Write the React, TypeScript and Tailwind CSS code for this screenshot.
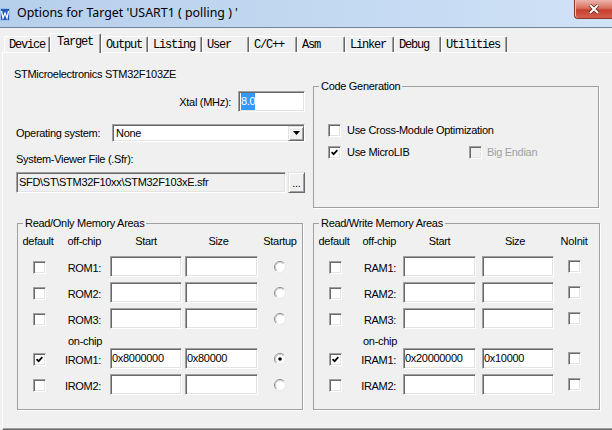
import React from "react";

// classic Win32 3D edges
const sunken =
  "border border-t-[#a0a0a0] border-l-[#a0a0a0] border-r-white border-b-white shadow-[inset_1px_1px_0_#696969,inset_-1px_-1px_0_#e3e3e3]";
const raised =
  "border border-t-[#e3e3e3] border-l-[#e3e3e3] border-r-[#696969] border-b-[#696969] shadow-[inset_1px_1px_0_#fff,inset_-1px_-1px_0_#a0a0a0]";

const tabs = [
  { label: "Device", w: "w-[46px]" },
  { label: "Target", w: "w-[51px]", active: true },
  { label: "Output", w: "w-[47px]" },
  { label: "Listing", w: "w-[54px]" },
  { label: "User", w: "w-[47px]" },
  { label: "C/C++", w: "w-[48px]" },
  { label: "Asm", w: "w-[48px]" },
  { label: "Linker", w: "w-[49px]" },
  { label: "Debug", w: "w-[47px]" },
  { label: "Utilities", w: "w-[66px]" },
];

type Cols = { c1: string; c2: string; start: string; size: string; c5: string };

const roCols: Cols = {
  c1: "w-[40px]",
  c2: "w-[43px]",
  start: "ml-[9px] w-[72px]",
  size: "ml-[3px] w-[73px]",
  c5: "w-[44px]",
};
const rwCols: Cols = {
  c1: "w-[40px]",
  c2: "w-[42px]",
  start: "ml-[7px] w-[73px]",
  size: "ml-[6px] w-[72px]",
  c5: "w-[40px]",
};

function Check({ on, disabled }: { on?: boolean; disabled?: boolean }) {
  return (
    <span
      className={`flex h-[13px] w-[13px] shrink-0 items-center justify-center ${sunken} ${
        disabled ? "bg-[#f0f0f0]" : "bg-white"
      }`}
    >
      {on && (
        <svg width="7" height="7" viewBox="0 0 7 7">
          <path d="M0.6 3.2 L2.6 5.2 L6.4 1.2" stroke="#000" strokeWidth="1.7" fill="none" />
        </svg>
      )}
    </span>
  );
}

function Radio({ on }: { on?: boolean }) {
  return (
    <svg width="12" height="12" viewBox="0 0 12 12">
      <circle cx="6" cy="6" r="5.5" fill="#fff" />
      <path d="M2.1 9.9A5.5 5.5 0 0 1 9.9 2.1" stroke="#8c8c8c" fill="none" />
      <path d="M9.9 2.1A5.5 5.5 0 0 1 2.1 9.9" stroke="#e8e8e8" fill="none" />
      <path d="M2.8 9.2A4.5 4.5 0 0 1 9.2 2.8" stroke="#c8c8c8" fill="none" />
      {on && <circle cx="6" cy="6" r="1.8" fill="#000" />}
    </svg>
  );
}

function Edit({ value, className }: { value?: string; className: string }) {
  return (
    <div className={`flex h-[21px] items-center bg-white pl-[1px] ${sunken} ${className}`}>
      {value}
    </div>
  );
}

function Group({ title, className, children }: { title: string; className: string; children: React.ReactNode }) {
  return (
    <fieldset className={`border border-[#a0a0a0] shadow-[1px_1px_0_#fff] ${className}`}>
      <legend className="ml-[5px] px-[2px] leading-[14px]">{title}</legend>
      {children}
    </fieldset>
  );
}

function MemRow({
  cols,
  label,
  start,
  size,
  def,
  tail,
  className = "",
}: {
  cols: Cols;
  label: string;
  start?: string;
  size?: string;
  def?: boolean;
  tail: React.ReactNode;
  className?: string;
}) {
  return (
    <div className={`flex h-[21px] items-center ${className}`}>
      <span className={`${cols.c1} flex justify-center pl-[2px] pt-[2px]`}>
        <Check on={def} />
      </span>
      <span className={`${cols.c2} pt-[3px] text-right`}>{label}</span>
      <Edit value={start} className={cols.start} />
      <Edit value={size} className={cols.size} />
      <span className={`${cols.c5} flex justify-center`}>{tail}</span>
    </div>
  );
}

function MemHeader({ cols, last }: { cols: Cols; last: string }) {
  return (
    <div className="mt-[4px] flex h-[14px] items-center leading-[14px]">
      <span className={`${cols.c1} text-center`}>default</span>
      <span className={`${cols.c2} text-right`}>off-chip</span>
      <span className={`${cols.start} text-center`}>Start</span>
      <span className={`${cols.size} pr-[6px] text-center`}>Size</span>
      <span className={`${cols.c5} text-center`}>{last}</span>
    </div>
  );
}

export default function App() {
  return (
    <div className="flex h-[430px] w-[612px] flex-col overflow-hidden bg-[#f0f0f0] font-['Liberation_Sans',Arial,sans-serif] text-[11px] tracking-[-0.3px] text-black">
      {/* Title bar */}
      <div className="flex h-[28px] shrink-0 border-b border-[#71839a] bg-[linear-gradient(to_right,#b6cfeb,#c4daf2_60%,#d0e2f6)]">
        <svg width="10" height="13" viewBox="0 0 10 13" className="mt-[8px]">
          <rect x="0" y="0" width="10" height="13" fill="#2456b8" />
          <rect x="0.5" y="0.5" width="9" height="12" fill="none" stroke="#9cc0ee" />
          <path d="M1.5 3 L3 10 L5 5 L7 10 L8.5 3" stroke="#fff" strokeWidth="1.3" fill="none" />
        </svg>
        <span className="ml-[7px] self-center font-['Noto_Sans',sans-serif] text-[12.4px] tracking-normal text-black">
          Options for Target 'USART1 ( polling ) '
        </span>
        <div className="ml-auto flex h-[19px] w-[38px] items-center justify-center self-start rounded-bl-[4px] border-b border-l border-[#8a3128] bg-[linear-gradient(#ebb5ac,#d9705f_45%,#c6402f_55%,#d55e4e)] shadow-[inset_1px_0_0_#f0c4bb]">
          <svg width="12" height="10" viewBox="0 0 12 10">
            <path d="M2 1 L10 9 M10 1 L2 9" stroke="#5b1f19" strokeWidth="3.4" />
            <path d="M2 1 L10 9 M10 1 L2 9" stroke="#fff" strokeWidth="2" />
          </svg>
        </div>
      </div>

      <div className="flex flex-1 flex-col pl-[2px]">
        {/* Tab strip */}
        <div className="flex h-[24px] shrink-0 items-end pl-[2px] font-['Liberation_Mono',monospace] text-[12px] tracking-[-1.2px]">
          {tabs.map((t) => (
            <div
              key={t.label}
              className={`${t.w} flex items-center rounded-t-[2px] border-t border-l border-r border-t-white border-l-white border-r-[#696969] shadow-[inset_-1px_0_0_#a0a0a0] ${
                t.active ? "relative z-10 -mb-px h-[20px] bg-[#f0f0f0] pb-[3px] pl-[6px]" : "h-[16px] pl-[4px] pt-px"
              }`}
            >
              {t.label}
            </div>
          ))}
        </div>

        {/* Target page */}
        <div className="flex flex-1 flex-col border-t border-l border-b border-t-white border-l-white border-b-[#696969] shadow-[inset_0_-1px_0_#a0a0a0]">
          <div className="flex h-[163px] shrink-0 items-start">
            <div className="ml-[11px] flex w-[291px] flex-col">
              <div className="mt-[14px] h-[14px] leading-[14px]">STMicroelectronics STM32F103ZE</div>
              <div className="mt-[10px] flex h-[21px] items-center justify-end">
                <span className="mr-[7px] pt-[2px]">Xtal (MHz):</span>
                <div className={`flex h-[21px] w-[67px] items-center bg-white pl-[2px] ${sunken}`}>
                  <span className="bg-[#3399ff] text-white">8.0</span>
                </div>
              </div>
              <div className="mt-[12px] flex h-[18px] items-center">
                <span className="ml-[2px] w-[96px]">Operating system:</span>
                <div className={`flex h-[18px] w-[193px] items-center bg-white pl-[3px] ${sunken}`}>
                  <span className="flex-1">None</span>
                  <span className={`flex h-[15px] w-[16px] items-center justify-center bg-[#f0f0f0] ${raised}`}>
                    <svg width="7" height="4" viewBox="0 0 7 4">
                      <path d="M0 0 H7 L3.5 4 Z" fill="#000" />
                    </svg>
                  </span>
                </div>
              </div>
              <div className="mt-[10px] ml-[2px] h-[14px] leading-[14px]">System-Viewer File (.Sfr):</div>
              <div className="mt-[6px] flex h-[21px]">
                <div className={`ml-[2px] flex h-[21px] w-[270px] items-center bg-[#f0f0f0] pl-[2px] ${sunken}`}>
                  SFD\ST\STM32F10xx\STM32F103xE.sfr
                </div>
                <div className={`ml-[2px] flex h-[21px] w-[17px] items-end justify-center bg-[#f0f0f0] pb-[3px] leading-none ${raised}`}>
                  ...
                </div>
              </div>
            </div>

            <Group title="Code Generation" className="mt-[26px] ml-[8px] h-[129px] w-[286px]">
              <div className="mt-[30px] flex h-[14px] items-center pl-[14px]">
                <Check />
                <span className="ml-[6px]">Use Cross-Module Optimization</span>
              </div>
              <div className="mt-[8px] flex h-[14px] items-center pl-[14px]">
                <Check on />
                <span className="ml-[6px] w-[122px]">Use MicroLIB</span>
                <Check disabled />
                <span className="ml-[5px] text-[#a0a0a0]">Big Endian</span>
              </div>
            </Group>
          </div>

          <div className="flex">
            <Group title="Read/Only Memory Areas" className="ml-[14px] h-[194px] w-[286px]">
              <MemHeader cols={roCols} last="Startup" />
              <MemRow cols={roCols} label="ROM1:" tail={<Radio />} className="mt-[8px]" />
              <MemRow cols={roCols} label="ROM2:" tail={<Radio />} className="mt-[5px]" />
              <MemRow cols={roCols} label="ROM3:" tail={<Radio />} className="mt-[5px]" />
              <div className="mt-[5px] h-[14px] pl-[50px] leading-[14px]">on-chip</div>
              <MemRow cols={roCols} label="IROM1:" start="0x8000000" size="0x80000" def tail={<Radio on />} />
              <MemRow cols={roCols} label="IROM2:" tail={<Radio />} className="mt-[5px]" />
            </Group>
            <Group title="Read/Write Memory Areas" className="ml-[10px] h-[194px] w-[287px]">
              <MemHeader cols={rwCols} last="NoInit" />
              <MemRow cols={rwCols} label="RAM1:" tail={<Check />} className="mt-[8px]" />
              <MemRow cols={rwCols} label="RAM2:" tail={<Check />} className="mt-[5px]" />
              <MemRow cols={rwCols} label="RAM3:" tail={<Check />} className="mt-[5px]" />
              <div className="mt-[5px] h-[14px] pl-[49px] leading-[14px]">on-chip</div>
              <MemRow cols={rwCols} label="IRAM1:" start="0x20000000" size="0x10000" def tail={<Check />} />
              <MemRow cols={rwCols} label="IRAM2:" tail={<Check />} className="mt-[5px]" />
            </Group>
          </div>
        </div>
      </div>
    </div>
  );
}
